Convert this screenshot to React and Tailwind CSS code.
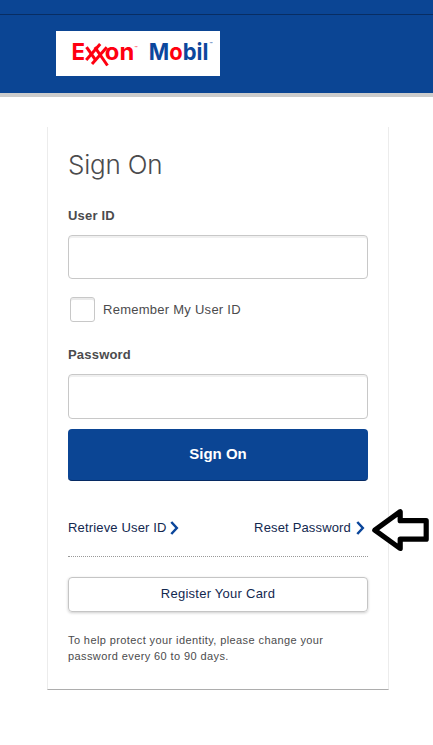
import React, { useState } from 'react';

function Logo() {
  return (
    <svg width="164" height="45" viewBox="0 0 164 45" className="block bg-white" role="img" aria-label="Exxon Mobil">
      <g fontFamily="Inter, 'Liberation Sans', sans-serif" fontWeight="700" fill="#ff0010">
        <text x="15.4" y="29" fontSize="23.5" textLength="13.6" lengthAdjust="spacingAndGlyphs">E</text>
        <text x="48.8" y="29" fontSize="23.5" textLength="29.4" lengthAdjust="spacingAndGlyphs">on</text>
        <text x="78.6" y="19" fontSize="5" fontWeight="400">™</text>
      </g>
      {/* interlocked double x */}
      <g stroke="#ff0010" strokeWidth="3" fill="none">
        <path d="M30.5 16.2L39.5 28.8" />
        <path d="M44.2 13L30.2 29" />
        <path d="M38.8 16.2L51.5 34.5" />
        <path d="M50.8 16.2L36 33" />
      </g>
      <g fontFamily="Inter, 'Liberation Sans', sans-serif" fontWeight="700" fontSize="23.5" fill="#0c479d">
        <text x="92.8" y="29" textLength="59.6" lengthAdjust="spacingAndGlyphs">M<tspan fill="#ff0010">o</tspan>bil</text>
        <text x="153.6" y="14.5" fontSize="5" fontWeight="400">™</text>
      </g>
    </svg>
  );
}

function Chevron() {
  return (
    <svg width="9" height="14" viewBox="0 0 9 14" className="block flex-shrink-0" fill="none" stroke="#0b469b" strokeWidth="2.5">
      <path d="M1.3 1L6.8 7L1.3 13" />
    </svg>
  );
}

function Field({ label, type, value, onChange, className }) {
  return (
    <label className="block">
      <span className="block h-4 text-[13px] leading-4 font-bold tracking-[0.2px]">{label}</span>
      <input type={type} value={value} onChange={e=>onChange(e.target.value)} className={`block w-full mt-[11px] px-3 rounded border border-[#c8c8c8] shadow-[inset_0_2px_0_#f0f0f0] outline-none ${className}`}/>
    </label>
  );
}

export default function App() {
  const [userId, setUserId] = useState('');
  const [password, setPassword] = useState('');
  const [remember, setRemember] = useState(false);

  return (
    <div className="relative w-[433px] h-[745px] overflow-hidden bg-white text-[#4b4b4d] font-['Liberation_Sans',Arial,sans-serif]">
      <header className="h-[97px] bg-[#0b4594] border-b-4 border-[#cccccc]">
        <div className="h-[15px] border-b border-[#082d63]"/>
        <div className="pt-4 pl-14"><Logo/></div>
      </header>

      <main className="w-[342px] h-[563px] mt-[30px] ml-[47px] px-5 border-x border-b border-x-[#ececec] border-b-[#adadad]">
        <h1 className="pt-[20px] h-[81px] text-[26px] leading-9 font-light tracking-[-0.2px] font-[Inter,sans-serif]">Sign On</h1>
        <form onSubmit={e=>e.preventDefault()}>
          <Field label="User ID" type="text" value={userId} onChange={setUserId} className="h-11"/>
          <label className="flex items-center h-[26px] mt-[17px] mb-[25px] pl-0.5 text-[13px] tracking-[0.26px]">
            <input type="checkbox" checked={remember} onChange={e=>setRemember(e.target.checked)} className="appearance-none w-[25px] h-[25px] mr-2 rounded-[3px] border border-[#c8c8c8] shadow-[inset_0_2px_0_#eaeaea] checked:bg-[#0b4594]"/>
            <span className="pt-0.5">Remember My User ID</span>
          </label>
          <Field label="Password" type="password" value={password} onChange={setPassword} className="h-[45px]"/>
          <button type="submit" className="block w-full h-[52px] mt-[10px] rounded bg-[#0b4594] border-b border-[#062a63] text-white text-[15px] font-bold">Sign On</button>
        </form>
        <div className="flex items-center justify-between h-[76px] pt-[37px] pb-[18px] border-b border-dotted border-[#999] text-[13px] tracking-[0.16px] text-[#12284f]">
          <a href="#retrieve" className="flex items-center gap-[3px]">Retrieve User ID <Chevron/></a>
          <a href="#reset" className="flex items-center gap-[5px] pr-[3px]">Reset Password <Chevron/></a>
        </div>
        <button type="button" className="block w-full h-[35px] mt-5 pb-0.5 rounded border border-[#c5c5c5] shadow-[0_1px_3px_rgba(0,0,0,0.2)] text-[13px] tracking-[0.25px] text-[#12284f]">Register Your Card</button>
        <p className="mt-5 text-[11px] leading-4 tracking-[0.4px]">To help protect your identity, please change your password every 60 to 90 days.</p>
      </main>

      {/* callout arrow */}
      <svg width="62" height="48" viewBox="0 0 62 48" className="absolute left-[371px] top-[506px]" fill="white" stroke="black" strokeWidth="5.2" strokeLinejoin="round">
        <path d="M3.8 24.2L29.2 5.7V14.7H55.2V33.2H29.2V42.5Z" />
      </svg>
    </div>
  );
}
